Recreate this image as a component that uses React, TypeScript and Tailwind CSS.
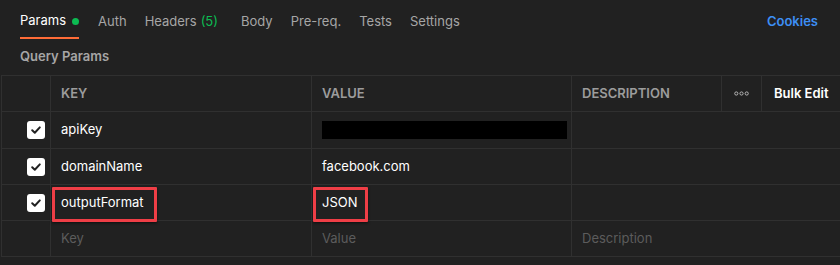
import React from "react";

const font = { fontFamily: "Inter, 'Noto Sans', sans-serif" };

function Check() {
  return (
    <div className="w-[18px] h-[18px] rounded-[3px] bg-white flex items-center justify-center">
      <svg width="12" height="12" viewBox="0 0 12 12">
        <path d="M2.2 6.3 L4.8 8.8 L9.8 3.4" fill="none" stroke="#212121" strokeWidth="2" strokeLinecap="round" strokeLinejoin="round" />
      </svg>
    </div>
  );
}

const cell = "border-r border-b border-[#303030] flex items-center";

export default function App() {
  const rows = [
    { k: "apiKey", v: null as string | null, box: false },
    { k: "domainName", v: "facebook.com", box: false },
    { k: "outputFormat", v: "JSON", box: true },
  ];
  return (
    <div className="w-[840px] h-[265px] bg-[#212121] overflow-hidden text-[13px]" style={font}>
      {/* tabs */}
      <div className="flex items-start h-[39px] pl-[20px] pr-[22px]">
        <div className="h-[39px] pt-[5px] border-b-2 border-[#ff6c37] flex items-center text-white">
          Params
          <span className="ml-[6px] w-[7px] h-[7px] rounded-full bg-[#0cbb52]" />
        </div>
        <div className="h-[39px] pt-[5px] ml-[19px] flex items-center text-[#a6a6a6]">Auth</div>
        <div className="h-[39px] pt-[5px] ml-[18px] flex items-center text-[#a6a6a6]">
          Headers<span className="ml-[4px] text-[#0cbb52]">(5)</span>
        </div>
        <div className="h-[39px] pt-[5px] ml-[23px] flex items-center text-[#a6a6a6]">Body</div>
        <div className="h-[39px] pt-[5px] ml-[18px] flex items-center text-[#a6a6a6]">Pre-req.</div>
        <div className="h-[39px] pt-[5px] ml-[18px] flex items-center text-[#a6a6a6]">Tests</div>
        <div className="h-[39px] pt-[5px] ml-[18px] flex items-center text-[#a6a6a6]">Settings</div>
        <div className="ml-auto h-[39px] pt-[5px] flex items-center font-semibold text-[#3d8ff5]">Cookies</div>
      </div>
      <div className="h-[36px] flex items-center pl-[20px] font-semibold text-[#a6a6a6]">Query Params</div>
      {/* table */}
      <div className="ml-px border-l border-t border-[#303030] grid grid-cols-[49px_261px_260px_150px_40px_1fr]">
        {/* header */}
        <div className={`${cell} h-[36px]`} />
        <div className={`${cell} h-[36px] pl-[10px] text-[13px] font-semibold text-[#9c9c9c]`}>KEY</div>
        <div className={`${cell} h-[36px] pl-[10px] text-[13px] font-semibold text-[#9c9c9c]`}>VALUE</div>
        <div className={`${cell} h-[36px] pl-[10px] text-[13px] font-semibold text-[#9c9c9c]`}>DESCRIPTION</div>
        <div className={`${cell} h-[36px] justify-center`}>
          <svg width="15" height="5" viewBox="0 0 15 5">
            <circle cx="2.3" cy="2.5" r="1.6" fill="none" stroke="#b5b5b5" strokeWidth="1" />
            <circle cx="7.5" cy="2.5" r="1.6" fill="none" stroke="#b5b5b5" strokeWidth="1" />
            <circle cx="12.7" cy="2.5" r="1.6" fill="none" stroke="#b5b5b5" strokeWidth="1" />
          </svg>
        </div>
        <div className="border-b border-[#303030] h-[36px] flex items-center pl-[12px] text-[13px] font-semibold text-white">Bulk Edit</div>
        {rows.map((r, i) => {
          const h = i === 0 ? "h-[37px]" : "h-[36px]";
          return (
            <React.Fragment key={r.k}>
              <div className={`${cell} ${h} justify-end pr-[5px]`}>
                <Check />
              </div>
              <div className={`${cell} ${h} pl-[10px] text-white relative`}>
                {r.k}
                {r.box && (
                  <div className="absolute left-px top-[2px] w-[105px] h-[35px] border-[3px] border-[#ef3e46] rounded-[1px] shadow-[0_1px_3px_rgba(0,0,0,0.6)]" />
                )}
              </div>
              <div className={`${cell} ${h} pl-[10px] text-white relative`}>
                {r.v === null ? <div className="w-[245px] h-[18px] bg-black" /> : r.v}
                {r.box && (
                  <div className="absolute left-px top-[2px] w-[55px] h-[35px] border-[3px] border-[#ef3e46] rounded-[1px] shadow-[0_1px_3px_rgba(0,0,0,0.6)]" />
                )}
              </div>
              <div className={`border-b border-[#303030] ${h} col-span-3`} />
            </React.Fragment>
          );
        })}
        <div className={`${cell} h-[36px]`} />
        <div className={`${cell} h-[36px] pl-[10px] text-[#5c5c5c]`}>Key</div>
        <div className={`${cell} h-[36px] pl-[10px] text-[#5c5c5c]`}>Value</div>
        <div className="border-b border-[#303030] h-[36px] col-span-3 flex items-center pl-[10px] text-[#5c5c5c]">Description</div>
      </div>
    </div>
  );
}
